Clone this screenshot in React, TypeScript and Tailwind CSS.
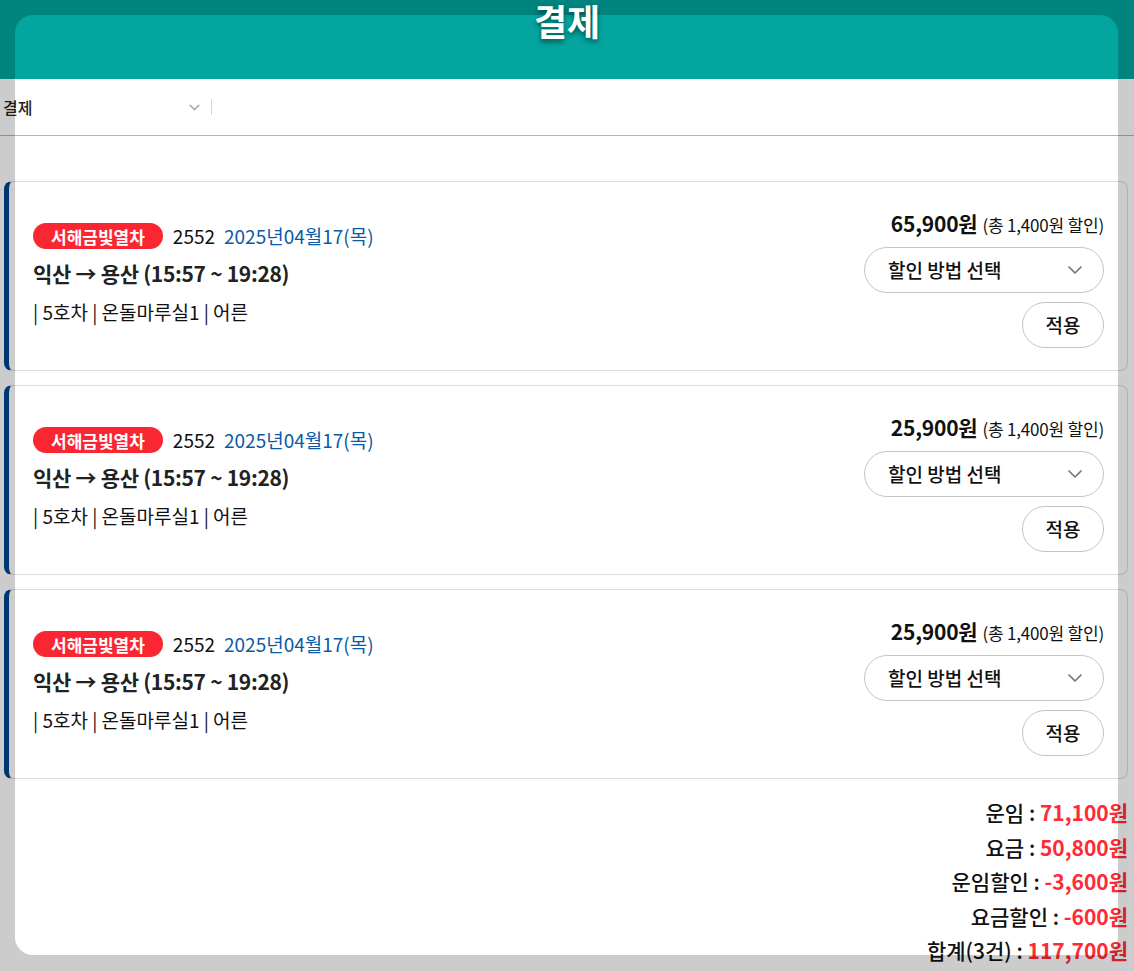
import { ChevronDown } from "lucide-react";

const tickets = [
  { price: "65,900원" },
  { price: "25,900원" },
  { price: "25,900원" },
];

const totals = [
  { label: "운임", value: "71,100원" },
  { label: "요금", value: "50,800원" },
  { label: "운임할인", value: "-3,600원" },
  { label: "요금할인", value: "-600원" },
  { label: "합계(3건)", value: "117,700원" },
];

function TicketCard({ price }: { price: string }) {
  return (
    <div className="flex items-center justify-between rounded-[8px] border border-[#dcdcdc] border-l-[5px] border-l-[#00438f] pl-[24px] pr-[23px] pt-[23px] pb-[22px]">
      {/* left: train info */}
      <div className="mb-[5px] flex flex-col">
        <div className="flex h-[26px] items-center">
          <span className="flex h-[26px] items-center rounded-full bg-[#fa2631] px-[18px] text-[17px] font-bold leading-none text-white">
            서해금빛열차
          </span>
          <span className="ml-[10px] text-[19px] text-[#111]">2552</span>
          <span className="ml-[9px] text-[19px] text-[#0b5aa6]">2025년04월17(목)</span>
        </div>
        <div className="mt-[9px] text-[21px] font-bold leading-[30px] tracking-[-0.3px] text-[#222]">
          익산 → 용산 (15:57 ~ 19:28)
        </div>
        <div className="mt-[11px] text-[19px] leading-[26px] text-[#111]">
          | 5호차 | 온돌마루실1 | 어른
        </div>
      </div>

      {/* right: price + discount */}
      <div className="flex flex-col items-end">
        <div className="flex h-[36px] items-baseline leading-[36px]">
          <span className="text-[21px] font-bold tracking-[-0.2px] text-[#111]">{price}</span>
          <span className="ml-[5px] text-[17px] tracking-[-0.2px] text-[#111]">(총 1,400원 할인)</span>
        </div>
        <button className="mt-[6px] flex h-[46px] w-[240px] items-center justify-between rounded-full border border-[#c4c4c4] bg-white pl-[23px] pr-[16px] text-[19px] font-medium text-[#111]">
          할인 방법 선택
          <ChevronDown className="h-[24px] w-[24px] text-[#777]" strokeWidth={1.7} />
        </button>
        <button className="mt-[9px] h-[46px] w-[82px] rounded-full border border-[#c4c4c4] bg-white text-[19px] font-medium text-[#111]">
          적용
        </button>
      </div>
    </div>
  );
}

export default function App() {
  return (
    <div className="relative min-h-screen w-full overflow-hidden bg-white font-['Noto_Sans_CJK_KR','Noto_Sans',sans-serif]">
      {/* Header */}
      <div className="flex h-[79px] justify-center bg-[#03a59e]">
        <h1 className="relative z-20 mt-[-1px] text-[36px] font-bold leading-[42px] text-white [text-shadow:0_3px_5px_rgba(0,0,0,0.5)]">
          결제
        </h1>
      </div>

      {/* Tab bar */}
      <div className="flex h-[57px] items-center border-b border-[#b5b5b5]">
        <div className="flex w-[203px] items-center justify-between pl-[3px]">
          <span className="text-[16px] font-medium text-[#222]">결제</span>
          <ChevronDown className="h-[17px] w-[17px] text-[#b0b0bc]" strokeWidth={2.6} />
        </div>
        <div className="ml-[8px] h-[16px] w-px bg-[#d6d6d6]" />
      </div>

      {/* Tickets */}
      <div className="flex flex-col gap-[14px] pl-[4px] pr-[6px] pt-[45px]">
        {tickets.map((t, i) => (
          <TicketCard key={i} price={t.price} />
        ))}
      </div>

      {/* Totals */}
      <div className="flex flex-col items-end pr-[6px] pt-[16px] text-[21px] leading-[34.5px]">
        {totals.map((row) => (
          <div key={row.label}>
            <span className="font-medium text-[#111]">{row.label} : </span>
            <span className="font-bold text-[#ff2a36]">{row.value}</span>
          </div>
        ))}
      </div>

      {/* dimmed backdrop around the modal window */}
      <div className="pointer-events-none absolute left-[15px] top-[15px] z-10 h-[940px] w-[1103px] rounded-[18px] shadow-[0_0_0_2000px_rgba(0,0,0,0.2)]" />
    </div>
  );
}
